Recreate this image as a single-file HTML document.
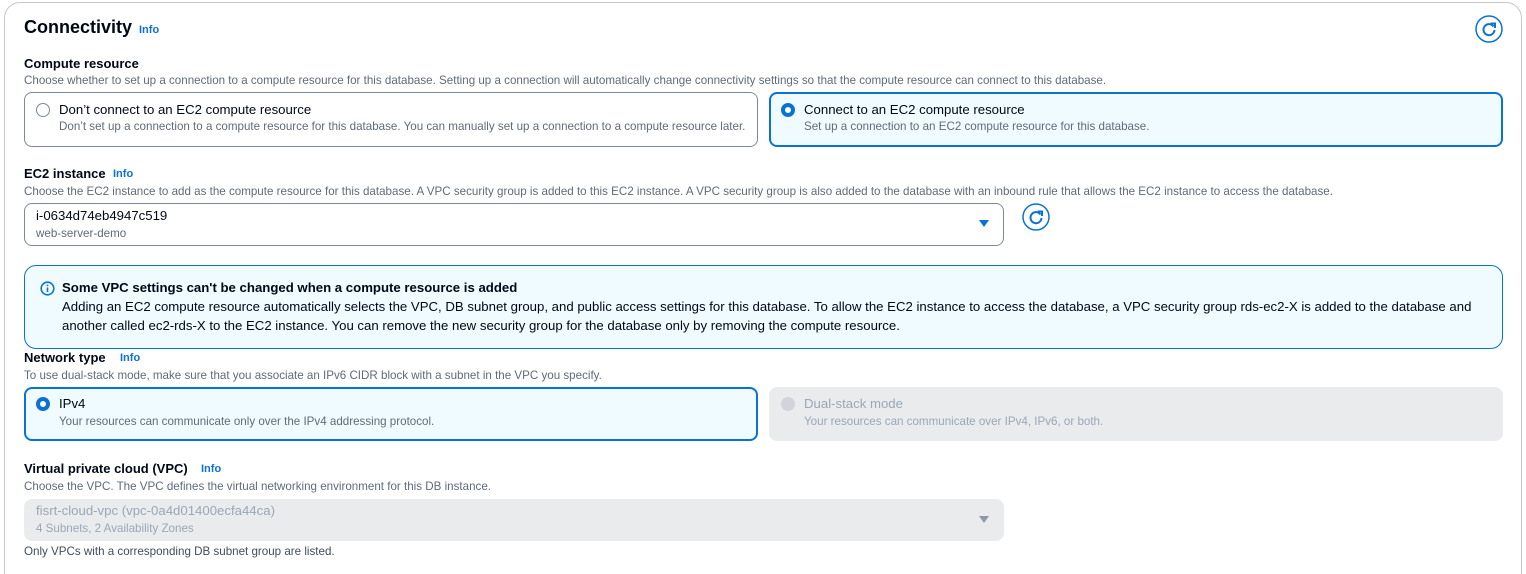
<!DOCTYPE html>
<html><head><meta charset="utf-8"><style>
*{box-sizing:border-box;margin:0;padding:0}
html,body{width:1526px;height:574px;overflow:hidden}
body{background:#fff;font-family:"Liberation Sans",sans-serif;color:#000716;position:relative}
.a{position:absolute;white-space:nowrap}
.outer{position:absolute;left:4px;top:2px;width:1518px;height:700px;border:1px solid #c6c6cd;border-radius:16px}
.h{font-size:18px;font-weight:bold;color:#000716}
.info{font-size:11px;font-weight:bold;color:#0972d3}
.lbl{font-size:13px;font-weight:bold}
.d{font-size:11.6px;color:#5f6b7a}
.box{position:absolute;border:1px solid #7d8998;border-radius:8px;background:#fff}
.sel{border:2px solid #0972d3;background:#f0fbff}
.dis{border:none;background:#e9ebed}
.t{font-size:13.2px}
.radio{position:absolute;width:14px;height:14px;border-radius:50%;border:1px solid #7d8998;background:#fff}
.radio.on{border:4px solid #0972d3}
.radio.off{border:none;background:#d1d5db}
</style></head><body>
<div class="outer"></div>
<div class="a h" style="left:24px;top:17px">Connectivity</div>
<div class="a info" style="left:139px;top:24px">Info</div>
<svg class="a" style="left:1475px;top:15px" width="28" height="28" viewBox="0 0 28 28"><circle cx="14" cy="14" r="13" fill="none" stroke="#0972d3" stroke-width="1.5"/><path d="M18.5 11.5 A5.5 5.5 0 1 0 19.5 15" fill="none" stroke="#0972d3" stroke-width="2"/><path d="M15.5 8.5 L20 8.5 L20 13" fill="none" stroke="#0972d3" stroke-width="2"/></svg>

<div class="a lbl" style="left:24px;top:56px">Compute resource</div>
<div class="a d" style="left:24px;top:74px">Choose whether to set up a connection to a compute resource for this database. Setting up a connection will automatically change connectivity settings so that the compute resource can connect to this database.</div>
<div class="box" style="left:24px;top:92px;width:734px;height:55px"></div>
<div class="radio" style="left:36px;top:103px"></div>
<div class="a t" style="left:59px;top:102px">Don’t connect to an EC2 compute resource</div>
<div class="a d" style="left:59px;top:120px">Don’t set up a connection to a compute resource for this database. You can manually set up a connection to a compute resource later.</div>
<div class="box sel" style="left:769px;top:92px;width:734px;height:55px"></div>
<div class="radio on" style="left:781px;top:103px"></div>
<div class="a t" style="left:804px;top:102px">Connect to an EC2 compute resource</div>
<div class="a d" style="left:804px;top:120px">Set up a connection to an EC2 compute resource for this database.</div>

<div class="a lbl" style="left:24px;top:166px">EC2 instance</div>
<div class="a info" style="left:113px;top:168px">Info</div>
<div class="a d" style="left:24px;top:185px">Choose the EC2 instance to add as the compute resource for this database. A VPC security group is added to this EC2 instance. A VPC security group is also added to the database with an inbound rule that allows the EC2 instance to access the database.</div>
<div class="box" style="left:24px;top:203px;width:980px;height:43px"></div>
<div class="a t" style="left:36px;top:208px">i-0634d74eb4947c519</div>
<div class="a d" style="left:36px;top:227px">web-server-demo</div>
<svg class="a" style="left:978px;top:219px" width="12" height="10"><path d="M1 1 L11 1 L6 8Z" fill="#0972d3"/></svg>
<svg class="a" style="left:1022px;top:203px" width="28" height="28" viewBox="0 0 28 28"><circle cx="14" cy="14" r="13" fill="none" stroke="#0972d3" stroke-width="1.5"/><path d="M18.5 11.5 A5.5 5.5 0 1 0 19.5 15" fill="none" stroke="#0972d3" stroke-width="2"/><path d="M15.5 8.5 L20 8.5 L20 13" fill="none" stroke="#0972d3" stroke-width="2"/></svg>

<div class="box" style="left:24px;top:265px;width:1479px;height:84px;border-color:#0972d3;border-radius:12px;background:#f0fbff"></div>
<svg class="a" style="left:40px;top:281px" width="15" height="15"><circle cx="7.5" cy="7.5" r="6.3" fill="none" stroke="#0972d3" stroke-width="1.6"/><rect x="6.7" y="6.5" width="1.6" height="4.5" fill="#0972d3"/><rect x="6.7" y="3.6" width="1.6" height="1.6" fill="#0972d3"/></svg>
<div class="a t" style="left:62px;top:280px;font-weight:bold">Some VPC settings can't be changed when a compute resource is added</div>
<div class="a t" style="left:62px;top:299px">Adding an EC2 compute resource automatically selects the VPC, DB subnet group, and public access settings for this database. To allow the EC2 instance to access the database, a VPC security group rds-ec2-X is added to the database and</div>
<div class="a t" style="left:62px;top:318px">another called ec2-rds-X to the EC2 instance. You can remove the new security group for the database only by removing the compute resource.</div>

<div class="a lbl" style="left:24px;top:350px">Network type</div>
<div class="a info" style="left:120px;top:352px">Info</div>
<div class="a d" style="left:24px;top:369px">To use dual-stack mode, make sure that you associate an IPv6 CIDR block with a subnet in the VPC you specify.</div>
<div class="box sel" style="left:24px;top:387px;width:734px;height:54px"></div>
<div class="radio on" style="left:36px;top:397px"></div>
<div class="a t" style="left:59px;top:396px">IPv4</div>
<div class="a d" style="left:59px;top:415px">Your resources can communicate only over the IPv4 addressing protocol.</div>
<div class="box dis" style="left:769px;top:387px;width:734px;height:54px"></div>
<div class="radio off" style="left:781px;top:397px"></div>
<div class="a t" style="left:804px;top:396px;color:#9ba7b6">Dual-stack mode</div>
<div class="a d" style="left:804px;top:415px;color:#9ba7b6">Your resources can communicate over IPv4, IPv6, or both.</div>

<div class="a lbl" style="left:24px;top:461px">Virtual private cloud (VPC)</div>
<div class="a info" style="left:201px;top:463px">Info</div>
<div class="a d" style="left:24px;top:480px">Choose the VPC. The VPC defines the virtual networking environment for this DB instance.</div>
<div class="box dis" style="left:24px;top:499px;width:980px;height:42px"></div>
<div class="a t" style="left:36px;top:503px;color:#9ba7b6">fisrt-cloud-vpc (vpc-0a4d01400ecfa44ca)</div>
<div class="a d" style="left:36px;top:522px;color:#9ba7b6">4 Subnets, 2 Availability Zones</div>
<svg class="a" style="left:978px;top:515px" width="12" height="10"><path d="M1 1 L11 1 L6 8Z" fill="#8d99a8"/></svg>
<div class="a d" style="left:24px;top:545px;color:#414d5c">Only VPCs with a corresponding DB subnet group are listed.</div>
</body></html>
